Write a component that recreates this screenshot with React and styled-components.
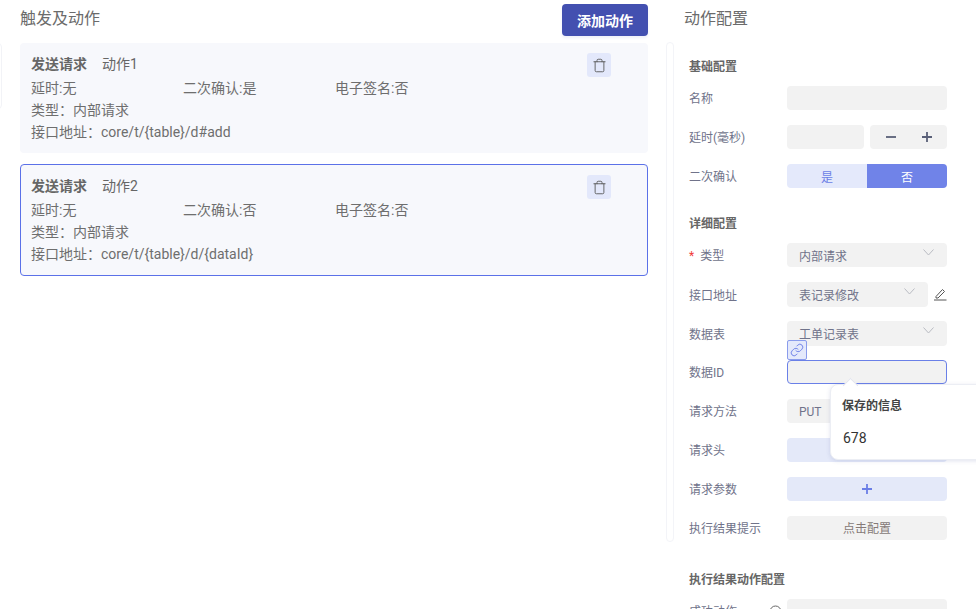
import React from "react";
import styled, { createGlobalStyle } from "styled-components";
import { Trash, Link } from "lucide-react";

const GlobalStyle = createGlobalStyle`
  html, body {
    margin: 0;
    padding: 0;
    background: #fff;
    overflow: hidden;
  }
  * { box-sizing: border-box; }
`;

const Page = styled.div`
  width: 976px;
  height: 609px;
  overflow: hidden;
  position: relative;
  display: flex;
  font-family: Roboto, "Noto Sans CJK SC", sans-serif;
  font-size: 14px;
  color: #666;
`;

const SideTab = styled.div`
  position: absolute;
  left: -6px;
  top: 43px;
  width: 8px;
  height: 66px;
  border: 1px solid #f2f3f7;
  border-radius: 4px;
`;

const LeftColumn = styled.div`
  width: 628px;
  margin-left: 20px;
  flex: none;
`;

const LeftHeader = styled.div`
  height: 43px;
  padding-top: 4px;
  display: flex;
  justify-content: space-between;
  align-items: flex-start;
`;

const PanelTitle = styled.div`
  font-size: 16px;
  line-height: 28px;
  color: #6b6b6b;
  padding-top: 1px;
`;

const AddButton = styled.button`
  width: 86px;
  height: 32px;
  border: none;
  border-radius: 4px;
  background: #4350b0;
  color: #fff;
  font: 600 14px Roboto, "Noto Sans CJK SC", sans-serif;
  box-shadow: 0 2px 3px #eef0f8;
  padding: 0;
`;

const Card = styled.div`
  position: relative;
  height: ${(p) => (p.$active ? "112px" : "110px")};
  margin-bottom: 11px;
  padding: ${(p) => (p.$active ? "10px 10px" : "10px 11px")};
  background: #f7f8fc;
  border: ${(p) => (p.$active ? "1px solid #5b71e8" : "none")};
  border-radius: 4px;
`;

const CardHead = styled.div`
  display: flex;
  gap: 15px;
  line-height: 22px;
  height: 24px;
`;

const CardType = styled.span`
  font-weight: 700;
  color: #666;
`;

const CardLine = styled.div`
  display: flex;
  line-height: 22px;
  height: 22px;
  color: #6e6e6e;
`;

const CardCell = styled.span`
  width: 152px;
`;

const DeleteButton = styled.div`
  position: absolute;
  top: 10px;
  right: ${(p) => (p.$active ? "36px" : "37px")};
  width: 24px;
  height: 24px;
  border-radius: 3px;
  background: #e3e8fb;
  display: flex;
  align-items: center;
  justify-content: center;
  color: #555;
`;

const RightColumn = styled.div`
  margin-left: 18px;
  width: 310px;
  flex: none;
`;

const RightTitle = styled(PanelTitle)`
  margin-left: 18px;
  height: 42px;
  padding-top: 5px;
`;

const ConfigPanel = styled.div`
  height: 500px;
  width: 8px;
  border: 1px solid #f3f4f8;
  border-radius: 4px;
  position: absolute;
  left: 666px;
  top: 42px;
`;

const Form = styled.div`
  margin-left: 23px;
  width: 258px;
`;

const SectionTitle = styled.div`
  font-size: 12px;
  font-weight: 700;
  line-height: 20px;
  color: #666;
  margin-top: ${(p) => p.$top || "15px"};
  margin-bottom: ${(p) => p.$bottom || "9px"};
`;

const Row = styled.div`
  display: flex;
  align-items: center;
  height: ${(p) => p.$h || "24px"};
  margin-bottom: ${(p) => p.$mb || "15px"};
  position: relative;
`;

const Label = styled.div`
  width: 98px;
  flex: none;
  font-size: 12px;
  line-height: 16px;
  padding-top: 2px;
  color: #70738a;
  white-space: nowrap;
`;

const Star = styled.span`
  color: #f03a3a;
  margin-right: 6px;
`;

const Input = styled.div`
  flex: ${(p) => (p.$w ? "none" : "1")};
  width: ${(p) => p.$w || "auto"};
  max-width: 160px;
  height: 100%;
  background: #f2f2f2;
  border-radius: 4px;
  border: ${(p) => (p.$focus ? "1px solid #6a80e8" : "none")};
`;

const Select = styled.div`
  width: ${(p) => p.$w || "160px"};
  height: 100%;
  background: #f2f2f2;
  border-radius: 4px;
  padding-left: 12px;
  padding-top: ${(p) => p.$pt || "0"};
  display: flex;
  align-items: center;
  justify-content: space-between;
  font-size: 12px;
  color: #70738a;
`;

const Chevron = styled.svg`
  width: 11px;
  height: 7px;
  margin: -6px 13px 0 0;
  fill: none;
  stroke: #b9bbc2;
  stroke-width: 1;
`;

const Stepper = styled.div`
  width: 77px;
  margin-left: 6px;
  height: 100%;
  background: #f2f2f2;
  border-radius: 4px;
  display: flex;
  align-items: center;
  justify-content: space-between;
  padding: 0 14px 0 15px;
`;

const Toggle = styled.div`
  width: 160px;
  height: 100%;
  display: flex;
  border-radius: 4px;
  overflow: hidden;
  font-size: 12px;
`;

const ToggleOption = styled.div`
  flex: 1;
  display: flex;
  align-items: center;
  justify-content: center;
  background: ${(p) => (p.$on ? "#7083e8" : "#e4e9fb")};
  color: ${(p) => (p.$on ? "#fff" : "#6b7ee6")};
`;

const AddWide = styled.div`
  width: 160px;
  height: 100%;
  border-radius: 4px;
  background: #e4e9f9;
  display: flex;
  align-items: center;
  justify-content: center;
`;

const ConfigButton = styled.div`
  width: 160px;
  height: 100%;
  border-radius: 4px;
  background: #f2f2f2;
  display: flex;
  align-items: center;
  justify-content: center;
  font-size: 12px;
  line-height: 16px;
  padding-top: 2px;
  color: #857a78;
`;

const PenIcon = styled.svg`
  width: 14px;
  height: 14px;
  margin: -1px 0 0 5px;
  fill: none;
  stroke: #555;
  stroke-width: 1;
`;

const LinkBadge = styled.div`
  position: absolute;
  left: 98px;
  top: -20px;
  width: 20px;
  height: 20px;
  background: #e4e9fb;
  border: 1px solid #8a9cec;
  border-radius: 2px;
  display: flex;
  align-items: center;
  justify-content: center;
  color: #6b7ee6;
`;

const Popover = styled.div`
  position: absolute;
  left: 830px;
  top: 384px;
  width: 170px;
  height: 76px;
  background: #fff;
  border: 1px solid #eceef4;
  border-radius: 8px;
  box-shadow: 0 1px 4px rgba(90, 100, 160, 0.18);
  padding: 11px 12px;
  &::before {
    content: "";
    position: absolute;
    left: 14px;
    top: -5px;
    width: 10px;
    height: 10px;
    background: #fff;
    border-left: 1px solid #e4e6ee;
    border-top: 1px solid #e4e6ee;
    transform: rotate(45deg);
  }
`;

const PopoverTitle = styled.div`
  font-size: 12px;
  font-weight: 700;
  line-height: 20px;
  margin-left: -1px;
  color: #444;
`;

const PopoverValue = styled.div`
  margin-top: 12px;
  font-size: 14px;
  line-height: 20px;
  color: #333;
`;

const InfoIcon = styled.svg`
  position: absolute;
  left: 80px;
  top: 6px;
  width: 13px;
  height: 13px;
  fill: none;
  stroke: #666;
`;

function ActionCard({ index, confirm, url, active }) {
  return (
    <Card $active={active}>
      <CardHead>
        <CardType>发送请求</CardType>
        <span>动作{index}</span>
      </CardHead>
      <CardLine>
        <CardCell>延时:无</CardCell>
        <CardCell>二次确认:{confirm}</CardCell>
        <CardCell>电子签名:否</CardCell>
      </CardLine>
      <CardLine>类型：内部请求</CardLine>
      <CardLine>接口地址：{url}</CardLine>
      <DeleteButton $active={active}>
        <Trash size={15} strokeWidth={1.4} />
      </DeleteButton>
    </Card>
  );
}

function Caret() {
  return (
    <Chevron viewBox="0 0 11 7">
      <path d="M0.5 0.5 L5.5 6 L10.5 0.5" />
    </Chevron>
  );
}

function Plus({ color, size }) {
  return (
    <svg width={size} height={size} viewBox="0 0 12 12">
      <path d="M6 1 V11 M1 6 H11" stroke={color} strokeWidth="1.8" fill="none" />
    </svg>
  );
}

export default function App() {
  return (
    <Page>
      <GlobalStyle />
      <SideTab />
      <LeftColumn>
        <LeftHeader>
          <PanelTitle>触发及动作</PanelTitle>
          <AddButton>添加动作</AddButton>
        </LeftHeader>
        <ActionCard index={1} confirm="是" url="core/t/{table}/d#add" />
        <ActionCard index={2} confirm="否" url="core/t/{table}/d/{dataId}" active />
      </LeftColumn>
      <RightColumn>
        <RightTitle>动作配置</RightTitle>
        <Form>
          <SectionTitle>基础配置</SectionTitle>
          <Row>
            <Label>名称</Label>
            <Input />
          </Row>
          <Row>
            <Label>延时(毫秒)</Label>
            <Input $w="77px" />
            <Stepper>
              <svg width="12" height="12" viewBox="0 0 12 12">
                <path d="M1 6 H11" stroke="#5a6078" strokeWidth="1.8" />
              </svg>
              <Plus color="#5a6078" size={12} />
            </Stepper>
          </Row>
          <Row>
            <Label>二次确认</Label>
            <Toggle>
              <ToggleOption>是</ToggleOption>
              <ToggleOption $on>否</ToggleOption>
            </Toggle>
          </Row>
          <SectionTitle $top="26px">详细配置</SectionTitle>
          <Row>
            <Label><Star>*</Star>类型</Label>
            <Select>内部请求<Caret /></Select>
          </Row>
          <Row $h="25px" $mb="14px">
            <Label>接口地址</Label>
            <Select $w="141px">表记录修改<Caret /></Select>
            <PenIcon viewBox="0 0 14 14">
              <path d="M3 9.5 L9.5 2.5 L11.5 4.5 L5 11 L3 11 Z M1 13 H13.5" />
            </PenIcon>
          </Row>
          <Row $h="25px" $mb="14px">
            <Label>数据表</Label>
            <Select>工单记录表<Caret /></Select>
          </Row>
          <Row>
            <Label>数据ID</Label>
            <Input $focus />
            <LinkBadge>
              <Link size={14} strokeWidth={1.6} />
            </LinkBadge>
          </Row>
          <Row>
            <Label>请求方法</Label>
            <Select $pt="2px">PUT</Select>
          </Row>
          <Row>
            <Label>请求头</Label>
            <AddWide />
          </Row>
          <Row>
            <Label>请求参数</Label>
            <AddWide><Plus color="#6b7ee6" size={12} /></AddWide>
          </Row>
          <Row>
            <Label>执行结果提示</Label>
            <ConfigButton>点击配置</ConfigButton>
          </Row>
          <SectionTitle $top="30px">执行结果动作配置</SectionTitle>
          <Row>
            <Label>成功动作</Label>
            <InfoIcon viewBox="0 0 13 13">
              <circle cx="6.5" cy="6.5" r="5.5" />
            </InfoIcon>
            <Input />
          </Row>
        </Form>
      </RightColumn>
      <ConfigPanel />
      <Popover>
        <PopoverTitle>保存的信息</PopoverTitle>
        <PopoverValue>678</PopoverValue>
      </Popover>
    </Page>
  );
}
